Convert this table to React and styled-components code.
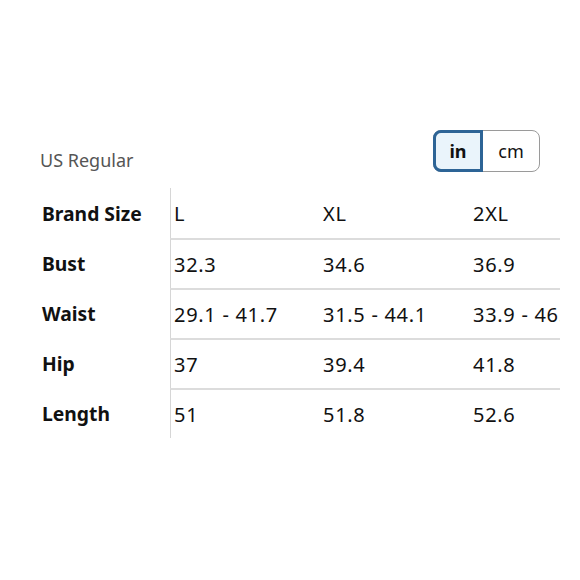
import React from 'react'
import styled, { createGlobalStyle } from 'styled-components';

const Global = createGlobalStyle`
  body {
    margin: 0;
    background: #fff;
    font-family: "Noto Sans", "Open Sans", Arial, sans-serif;
  }
`

const sizes = ['L', 'XL', '2XL']
const rows = [
    ['Bust', ['32.3', '34.6', '36.9']],
    ['Waist', ['29.1 - 41.7', '31.5 - 44.1', '33.9 - 46.5']],
    ['Hip', ['37', '39.4', '41.8']],
    ['Length', ['51', '51.8', '52.6']],
]

function App() {
    return (
        <>
            <Global />
            <Page>
                <Top>
                    <Region>US Regular</Region>
                    <Toggle>
                        <Unit active>in</Unit>
                        <Unit>cm</Unit>
                    </Toggle>
                </Top>
                <Table>
                    <Label>Brand Size</Label>
                    {sizes.map((s, i) => (
                        <Value key={s} first={i === 0} top>{s}</Value>
                    ))}
                    {rows.map(([name, vals]) => (
                        <React.Fragment key={name}>
                            <Label>{name}</Label>
                            {vals.map((v, i) => (
                                <Value key={i} first={i === 0}>{v}</Value>
                            ))}
                        </React.Fragment>
                    ))}
                </Table>
            </Page>
        </>
    )
}

const Page = styled.div`
    width: 560px;
    height: 580px;
    overflow: hidden;
    padding-top: 130px;
    box-sizing: border-box;
`

const Top = styled.div`
    display: flex;
    align-items: center;
    justify-content: space-between;
    padding: 0 20px 0 40px;
    height: 42px;
`

const Region = styled.div`
    font-size: 18px;
    color: #555;
    padding-top: 18px;
`

const Toggle = styled.div`
    display: flex;
    height: 42px;
    width: 107px;
    border: 1px solid #9a9a9a;
    border-radius: 8px;
    box-sizing: border-box;
`

const Unit = styled.div`
    flex: ${p => p.active ? '0 0 50px' : '1'};
    display: flex;
    align-items: center;
    justify-content: center;
    font-size: 18px;
    color: #111;
    font-weight: ${p => p.active ? 700 : 400};
    box-sizing: border-box;
    ${p => p.active && `
        background: #eaf4fb;
        border: 3px solid #2d6496;
        border-radius: 8px 0 0 8px;
        margin: -1px 0 -1px -1px;
    `}
`

const Table = styled.div`
    display: grid;
    grid-template-columns: 128px 150px 150px 150px;
    grid-auto-rows: 50px;
    margin-top: 16px;
    padding-left: 42px;
`

const Label = styled.div`
    display: flex;
    align-items: center;
    font-size: 19.3px;
    font-weight: 700;
    color: #111;
`

const Value = styled.div`
    display: flex;
    align-items: center;
    padding-left: 3px;
    font-size: 20px;
    letter-spacing: 0.7px;
    color: #111;
    white-space: nowrap;
    border-top: ${p => p.top ? 'none' : '2px solid #dcdcdc'};
    border-left: ${p => p.first ? '1px solid #d6d6d6' : 'none'};
    box-sizing: border-box;
`

export default App
